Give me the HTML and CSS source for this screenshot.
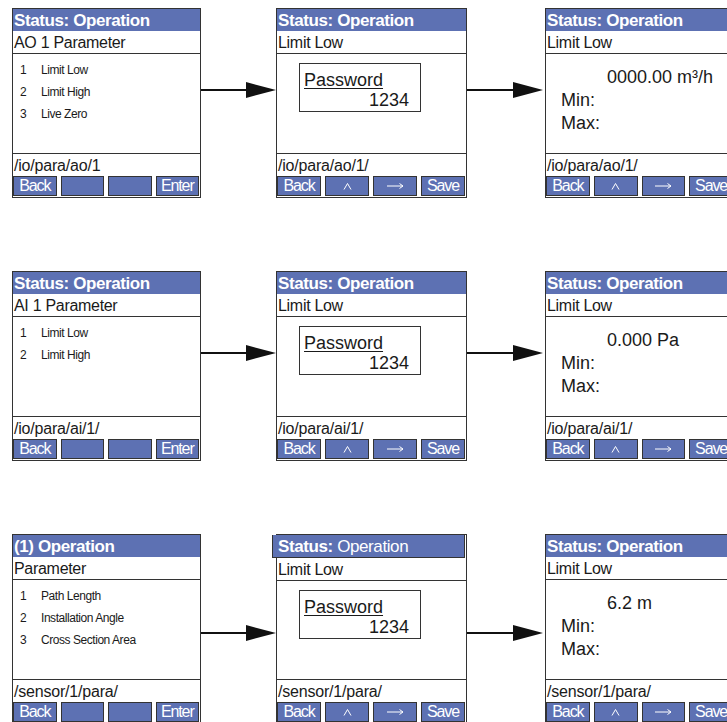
FILE: index.html
```html
<!DOCTYPE html>
<html lang="en">
<head>
  <meta charset="UTF-8">
  <title>Parameter menu flow</title>
  <link rel="stylesheet" href="styles.css">
</head>
<body>

  <div class="flow">

    <!-- analog output -->
    <div class="row">
      <div class="screen">
        <div class="head">Status: Operation</div>
        <div class="title">AO 1 Parameter</div>
        <div class="body">
          <ul class="menu">
            <li><span class="num">1</span>Limit Low</li>
            <li><span class="num">2</span>Limit High</li>
            <li><span class="num">3</span>Live Zero</li>
          </ul>
        </div>
        <div class="path">/io/para/ao/1</div>
        <div class="keys">
          <div class="key">Back</div>
          <div class="key"></div>
          <div class="key"></div>
          <div class="key">Enter</div>
        </div>
      </div>
      <div class="arrow"><div class="arrow-line"></div><div class="arrow-head"></div></div>
      <div class="screen mid">
        <div class="head">Status: Operation</div>
        <div class="title">Limit Low</div>
        <div class="body">
          <div class="pw">
            <div class="pw-label">Password</div>
            <div class="pw-value">1234</div>
          </div>
        </div>
        <div class="path">/io/para/ao/1/</div>
        <div class="keys">
          <div class="key">Back</div>
          <div class="key"><svg width="9" height="8" viewBox="0 0 9 8"><path d="M1 7.5L4.5 1.5L8 7.5" fill="none" stroke="#fff"/></svg></div>
          <div class="key"><svg width="17" height="8" viewBox="0 0 17 8"><path d="M0 4H16M12.5 1.5L16 4L12.5 6.5" fill="none" stroke="#fff"/></svg></div>
          <div class="key">Save</div>
        </div>
      </div>
      <div class="arrow second"><div class="arrow-line"></div><div class="arrow-head"></div></div>
      <div class="screen last">
        <div class="head">Status: Operation</div>
        <div class="title">Limit Low</div>
        <div class="body">
          <div class="readout">
            <div class="readout-value">0000.00 m³/h</div>
            <div>Min:</div>
            <div>Max:</div>
          </div>
        </div>
        <div class="path">/io/para/ao/1/</div>
        <div class="keys">
          <div class="key">Back</div>
          <div class="key"><svg width="9" height="8" viewBox="0 0 9 8"><path d="M1 7.5L4.5 1.5L8 7.5" fill="none" stroke="#fff"/></svg></div>
          <div class="key"><svg width="17" height="8" viewBox="0 0 17 8"><path d="M0 4H16M12.5 1.5L16 4L12.5 6.5" fill="none" stroke="#fff"/></svg></div>
          <div class="key">Save</div>
        </div>
      </div>
    </div>

    <!-- analog input -->
    <div class="row">
      <div class="screen">
        <div class="head">Status: Operation</div>
        <div class="title">AI 1 Parameter</div>
        <div class="body">
          <ul class="menu">
            <li><span class="num">1</span>Limit Low</li>
            <li><span class="num">2</span>Limit High</li>
          </ul>
        </div>
        <div class="path">/io/para/ai/1/</div>
        <div class="keys">
          <div class="key">Back</div>
          <div class="key"></div>
          <div class="key"></div>
          <div class="key">Enter</div>
        </div>
      </div>
      <div class="arrow"><div class="arrow-line"></div><div class="arrow-head"></div></div>
      <div class="screen mid">
        <div class="head">Status: Operation</div>
        <div class="title">Limit Low</div>
        <div class="body">
          <div class="pw">
            <div class="pw-label">Password</div>
            <div class="pw-value">1234</div>
          </div>
        </div>
        <div class="path">/io/para/ai/1/</div>
        <div class="keys">
          <div class="key">Back</div>
          <div class="key"><svg width="9" height="8" viewBox="0 0 9 8"><path d="M1 7.5L4.5 1.5L8 7.5" fill="none" stroke="#fff"/></svg></div>
          <div class="key"><svg width="17" height="8" viewBox="0 0 17 8"><path d="M0 4H16M12.5 1.5L16 4L12.5 6.5" fill="none" stroke="#fff"/></svg></div>
          <div class="key">Save</div>
        </div>
      </div>
      <div class="arrow second"><div class="arrow-line"></div><div class="arrow-head"></div></div>
      <div class="screen last">
        <div class="head">Status: Operation</div>
        <div class="title">Limit Low</div>
        <div class="body">
          <div class="readout">
            <div class="readout-value">0.000 Pa</div>
            <div>Min:</div>
            <div>Max:</div>
          </div>
        </div>
        <div class="path">/io/para/ai/1/</div>
        <div class="keys">
          <div class="key">Back</div>
          <div class="key"><svg width="9" height="8" viewBox="0 0 9 8"><path d="M1 7.5L4.5 1.5L8 7.5" fill="none" stroke="#fff"/></svg></div>
          <div class="key"><svg width="17" height="8" viewBox="0 0 17 8"><path d="M0 4H16M12.5 1.5L16 4L12.5 6.5" fill="none" stroke="#fff"/></svg></div>
          <div class="key">Save</div>
        </div>
      </div>
    </div>

    <!-- sensor -->
    <div class="row sensor">
      <div class="screen">
        <div class="head">(1) Operation</div>
        <div class="title">Parameter</div>
        <div class="body">
          <ul class="menu">
            <li><span class="num">1</span>Path Length</li>
            <li><span class="num">2</span>Installation Angle</li>
            <li><span class="num">3</span>Cross Section Area</li>
          </ul>
        </div>
        <div class="path">/sensor/1/para/</div>
        <div class="keys">
          <div class="key">Back</div>
          <div class="key"></div>
          <div class="key"></div>
          <div class="key">Enter</div>
        </div>
      </div>
      <div class="arrow"><div class="arrow-line"></div><div class="arrow-head"></div></div>
      <div class="screen mid">
        <div class="head shifted"><b>Status:</b> Operation</div>
        <div class="title">Limit Low</div>
        <div class="body">
          <div class="pw">
            <div class="pw-label">Password</div>
            <div class="pw-value">1234</div>
          </div>
        </div>
        <div class="path">/sensor/1/para/</div>
        <div class="keys">
          <div class="key">Back</div>
          <div class="key"><svg width="9" height="8" viewBox="0 0 9 8"><path d="M1 7.5L4.5 1.5L8 7.5" fill="none" stroke="#fff"/></svg></div>
          <div class="key"><svg width="17" height="8" viewBox="0 0 17 8"><path d="M0 4H16M12.5 1.5L16 4L12.5 6.5" fill="none" stroke="#fff"/></svg></div>
          <div class="key">Save</div>
        </div>
      </div>
      <div class="arrow second"><div class="arrow-line"></div><div class="arrow-head"></div></div>
      <div class="screen last">
        <div class="head">Status: Operation</div>
        <div class="title">Limit Low</div>
        <div class="body">
          <div class="readout">
            <div class="readout-value">6.2 m</div>
            <div>Min:</div>
            <div>Max:</div>
          </div>
        </div>
        <div class="path">/sensor/1/para/</div>
        <div class="keys">
          <div class="key">Back</div>
          <div class="key"><svg width="9" height="8" viewBox="0 0 9 8"><path d="M1 7.5L4.5 1.5L8 7.5" fill="none" stroke="#fff"/></svg></div>
          <div class="key"><svg width="17" height="8" viewBox="0 0 17 8"><path d="M0 4H16M12.5 1.5L16 4L12.5 6.5" fill="none" stroke="#fff"/></svg></div>
          <div class="key">Save</div>
        </div>
      </div>
    </div>

  </div>

</body>
</html>
```

FILE: styles.css
```css
html,
body {
  margin: 0;
  overflow: hidden;
  background-color: #fff;
}

body {
  font-family: "Liberation Sans", Arial, sans-serif;
  color: #1a1a1a;
}

.flow {
  display: flex;
  flex-direction: column;
  gap: 73px;
  padding: 8px 0 0 12px;
}

.row {
  display: flex;
  align-items: flex-start;
}

/* display screen */
.screen {
  flex: none;
  display: flex;
  flex-direction: column;
  width: 189px;
  height: 190px;
  box-sizing: border-box;
  border: 1px solid #333;
}

.screen.mid {
  width: 191px;
}

.screen.last {
  width: 190px;
}

.head {
  height: 22px;
  padding-left: 1px;
  background-color: #5d71b3;
  color: #fff;
  font-size: 17px;
  font-weight: bold;
  line-height: 23px;
  letter-spacing: -0.4px;
  white-space: nowrap;
}

.head.shifted {
  margin: 0 1px 0 -5px;
  padding-left: 5px;
  border: 1px solid #333;
  border-top: none;
  font-weight: normal;
}

.title {
  height: 22px;
  padding-left: 1px;
  border-bottom: 1px solid #333;
  font-size: 16px;
  line-height: 23px;
  letter-spacing: -0.3px;
  white-space: nowrap;
}

.body {
  flex: 1;
}

.path {
  height: 22px;
  padding-left: 1px;
  border-top: 1px solid #333;
  font-size: 16px;
  line-height: 23px;
  letter-spacing: -0.2px;
  white-space: nowrap;
}

.keys {
  display: flex;
  gap: 4px;
  height: 20px;
  padding: 0 1px 1px 0;
}

.key {
  flex: 1;
  display: flex;
  align-items: center;
  justify-content: center;
  box-sizing: border-box;
  background-color: #5d71b3;
  border: 1px solid #333;
  color: #fff;
  font-size: 16px;
  letter-spacing: -1.1px;
  line-height: 18px;
}

/* menu list */
.menu {
  list-style: none;
  margin: 0;
  padding: 5px 0 0 7px;
  font-size: 12px;
  letter-spacing: -0.45px;
}

.menu li {
  display: flex;
  line-height: 22px;
}

.num {
  width: 21px;
}

/* password prompt */
.pw {
  width: 122px;
  height: 49px;
  box-sizing: border-box;
  margin: 9px 0 0 22px;
  padding: 6px 11px 0 4px;
  border: 1px solid #333;
  font-size: 18px;
  line-height: 20px;
}

.pw-label {
  text-decoration: underline;
  text-underline-offset: 2px;
}

.pw-value {
  text-align: right;
}

/* value readout */
.readout {
  padding: 12px 0 0 15px;
  font-size: 18px;
  line-height: 23px;
}

.readout-value {
  padding-left: 46px;
}

/* connecting arrows */
.arrow {
  flex: none;
  display: flex;
  align-items: center;
  width: 75px;
  height: 16px;
  margin-top: 74px;
}

.arrow.second {
  width: 76px;
  margin-right: 2px;
}

.sensor .arrow {
  margin-top: 91px;
}

.arrow-line {
  flex: 1;
  height: 2px;
  background-color: #111;
}

.arrow-head {
  width: 0;
  height: 0;
  border-left: 30px solid #111;
  border-top: 8px solid transparent;
  border-bottom: 8px solid transparent;
}
```
